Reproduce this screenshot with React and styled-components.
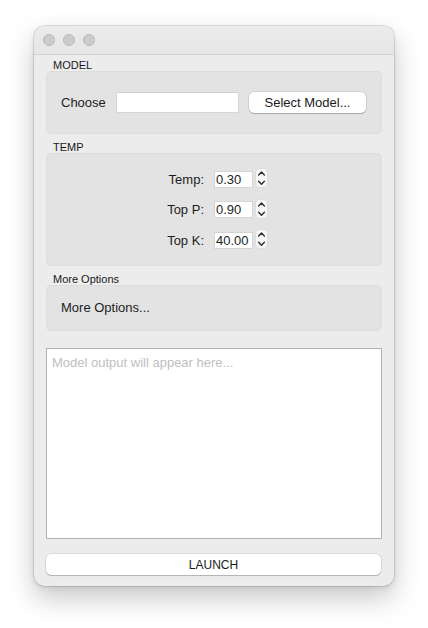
import React from "react";
import styled, { createGlobalStyle } from "styled-components";

const Global = createGlobalStyle`
  html, body { margin: 0; padding: 0; background: #ffffff; }
  body { font-family: "Liberation Sans", Arial, Helvetica, sans-serif; color: #1e1e1e; }
  * { box-sizing: border-box; }
`;

const Page = styled.div`
  width: 428px;
  height: 628px;
  padding: 26px 0 0 34px;
`;

const Window = styled.div`
  width: 360px;
  height: 560px;
  background: #ececec;
  border-radius: 10px;
  box-shadow: 0 0 0 0.5px rgba(0, 0, 0, 0.22), 0 12px 28px rgba(0, 0, 0, 0.22),
    0 2px 6px rgba(0, 0, 0, 0.08);
  display: flex;
  flex-direction: column;
  overflow: hidden;
`;

const TitleBar = styled.div`
  height: 29px;
  flex: none;
  background: linear-gradient(#ebebeb, #e6e6e6);
  border-bottom: 1px solid #d3d3d3;
  display: flex;
  align-items: center;
  gap: 8px;
  padding: 0 0 1px 9px;
`;

const Light = styled.span`
  width: 12px;
  height: 12px;
  border-radius: 50%;
  background: #cbcbcb;
  border: 0.5px solid #b9b9b9;
`;

const Content = styled.div`
  flex: 1;
  display: flex;
  flex-direction: column;
  padding: 0 12px 11px 12px;
`;

const Group = styled.section`
  display: flex;
  flex-direction: column;
  margin-top: ${(p) => p.$top || 0}px;
`;

const GroupLabel = styled.div`
  height: 16px;
  padding: 3px 0 0 7px;
  font-size: 11px;
  line-height: 14px;
  color: #1a1a1a;
`;

const Box = styled.div`
  height: ${(p) => p.$h}px;
  background: #e3e3e3;
  border: 1px solid #dcdcdc;
  border-radius: 5px;
`;

const ModelRow = styled(Box)`
  display: flex;
  align-items: center;
  padding: 0 15px 0 14px;
  font-size: 13px;
`;

const LineEdit = styled.div`
  flex: 1;
  height: 21px;
  margin-left: 10px;
  background: #ffffff;
  border: 1px solid #d6d6d6;
  border-top-color: #cfcfcf;
`;

const PushButton = styled.div`
  width: ${(p) => (p.$w ? `${p.$w}px` : "auto")};
  height: 21px;
  margin-left: ${(p) => p.$ml || 0}px;
  background: #ffffff;
  border-radius: 5px;
  box-shadow: 0 0 0 0.5px rgba(0, 0, 0, 0.16), 0 1px 1px rgba(0, 0, 0, 0.18);
  display: flex;
  align-items: center;
  justify-content: center;
  font-size: ${(p) => p.$fs || 13}px;
  color: #1a1a1a;
`;

const FormBox = styled(Box)`
  display: grid;
  grid-template-columns: 1fr 1fr;
  column-gap: 10px;
  row-gap: 10.5px;
  align-content: start;
  padding: 15px 10px 0 0;
  font-size: 13px;
`;

const FormLabel = styled.div`
  justify-self: end;
  align-self: center;
`;

const Field = styled.div`
  display: flex;
  align-items: center;
  gap: 2px;
  height: 20px;
`;

const SpinInput = styled.div`
  width: 39px;
  height: 17px;
  background: #ffffff;
  border: 1px solid #d4d4d4;
  font-size: 13px;
  line-height: 15px;
  padding-left: 1px;
  white-space: nowrap;
  overflow: hidden;
`;

const StepperWrap = styled.div`
  width: 13px;
  height: 20px;
  display: flex;
  margin-top: -2px;
`;

const OptionsBox = styled(Box)`
  display: flex;
  align-items: center;
  padding: 0 0 1px 14px;
  font-size: 13px;
`;

const Output = styled.div`
  margin-top: 17px;
  height: 191px;
  background: #ffffff;
  border: 1px solid #b3b3b3;
  padding: 6px 5px;
  font-size: 13px;
  color: #c0c0c0;
`;

const Launch = styled(PushButton)`
  margin-top: 15px;
  margin-right: 1px;
`;

function Stepper() {
  return (
    <StepperWrap>
      <svg width="13" height="20" viewBox="0 0 13 20">
        <rect x="0.5" y="0.5" width="12" height="19" rx="4.5" fill="#f7f7f7" stroke="#d6d6d6" strokeWidth="0.7" />
        <path d="M3.6 7 L6.5 4.1 L9.4 7" fill="none" stroke="#2a2a2a" strokeWidth="1.4" strokeLinecap="round" strokeLinejoin="round" />
        <path d="M3.6 13.3 L6.5 16.2 L9.4 13.3" fill="none" stroke="#2a2a2a" strokeWidth="1.4" strokeLinecap="round" strokeLinejoin="round" />
      </svg>
    </StepperWrap>
  );
}

const params = [
  { label: "Temp:", value: "0.30" },
  { label: "Top P:", value: "0.90" },
  { label: "Top K:", value: "40.00" },
];

export default function App() {
  return (
    <Page>
      <Global />
      <Window>
        <TitleBar>
          <Light />
          <Light />
          <Light />
        </TitleBar>
        <Content>
          <Group>
            <GroupLabel>MODEL</GroupLabel>
            <ModelRow $h={63}>
              <span>Choose</span>
              <LineEdit />
              <PushButton $w={117} $ml={10}>Select Model...</PushButton>
            </ModelRow>
          </Group>
          <Group $top={3}>
            <GroupLabel>TEMP</GroupLabel>
            <FormBox $h={113}>
              {params.map((p) => (
                <React.Fragment key={p.label}>
                  <FormLabel>{p.label}</FormLabel>
                  <Field>
                    <SpinInput>{p.value}</SpinInput>
                    <Stepper />
                  </Field>
                </React.Fragment>
              ))}
            </FormBox>
          </Group>
          <Group $top={3}>
            <GroupLabel>More Options</GroupLabel>
            <OptionsBox $h={46}>More Options...</OptionsBox>
          </Group>
          <Output>Model output will appear here...</Output>
          <Launch $fs={12}>LAUNCH</Launch>
        </Content>
      </Window>
    </Page>
  );
}
